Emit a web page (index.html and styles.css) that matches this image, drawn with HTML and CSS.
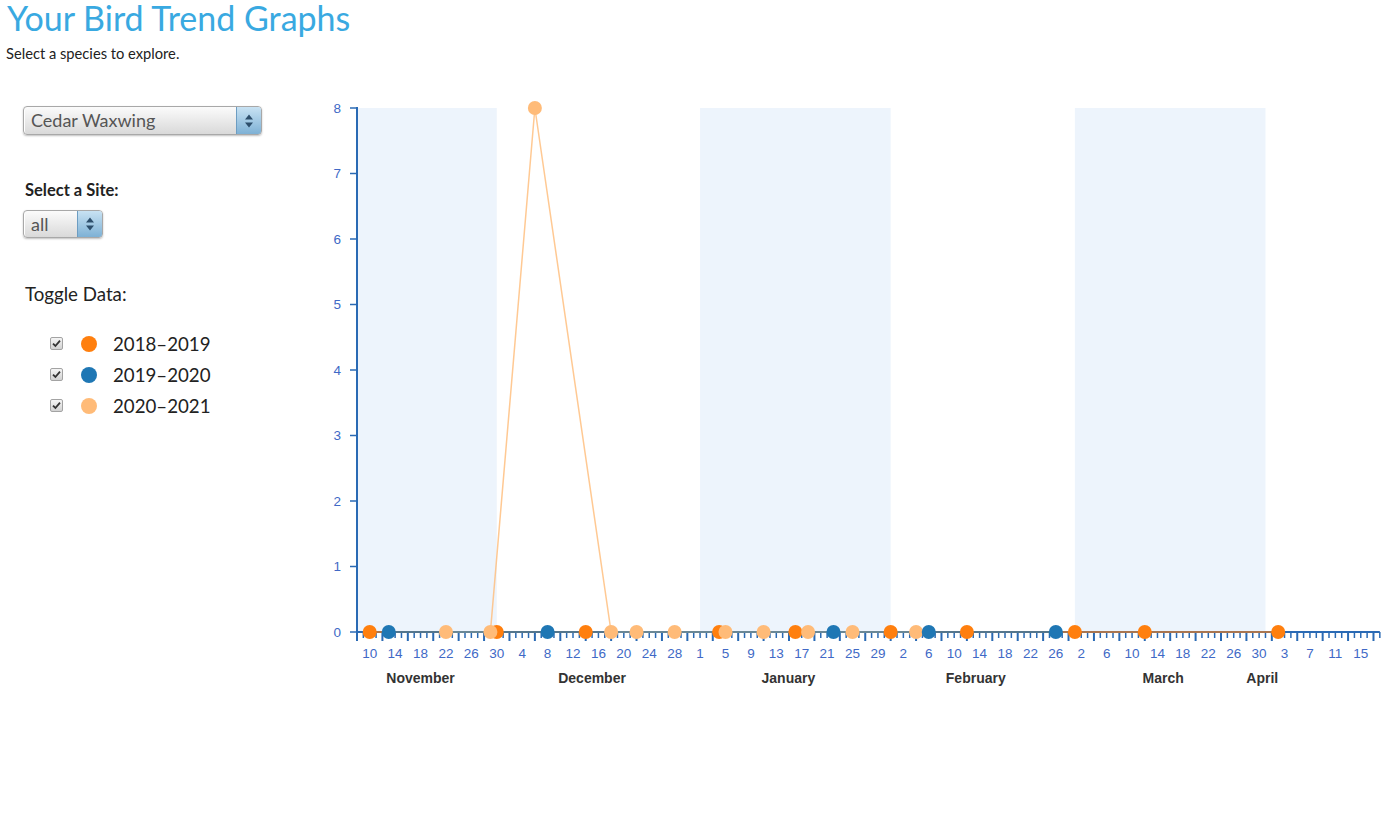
FILE: index.html
```html
<!DOCTYPE html>
<html lang="en">
<head>
  <meta charset="UTF-8">
  <title>Your Bird Trend Graphs</title>
  <link rel="stylesheet" href="styles.css">
</head>
<body>

  <h1>Your Bird Trend Graphs</h1>
  <p class="intro">Select a species to explore.</p>

  <div class="layout">

    <!-- Controls on the left -->
    <div class="sidebar">
      <div class="picker picker-wide">
        <span class="picker-value">Cedar Waxwing</span>
        <span class="picker-arrows">
          <svg width="10" height="16" viewBox="0 0 10 16"><path d="M1 6.5 L5 1.5 L9 6.5 Z M1 9.5 L5 14.5 L9 9.5 Z" fill="#2d4e6b"/></svg>
        </span>
      </div>

      <label class="site-label">Select a Site:</label>
      <div class="picker picker-small">
        <span class="picker-value">all</span>
        <span class="picker-arrows">
          <svg width="10" height="16" viewBox="0 0 10 16"><path d="M1 6.5 L5 1.5 L9 6.5 Z M1 9.5 L5 14.5 L9 9.5 Z" fill="#2d4e6b"/></svg>
        </span>
      </div>

      <p class="toggle-title">Toggle Data:</p>
      <ul class="legend">
        <li>
          <span class="check"><svg width="9" height="9" viewBox="0 0 9 9"><path d="M1 4.6 L3.4 7 L8 1.6" fill="none" stroke="#333" stroke-width="1.8"/></svg></span>
          <span class="dot season-a"></span>2018–2019
        </li>
        <li>
          <span class="check"><svg width="9" height="9" viewBox="0 0 9 9"><path d="M1 4.6 L3.4 7 L8 1.6" fill="none" stroke="#333" stroke-width="1.8"/></svg></span>
          <span class="dot season-b"></span>2019–2020
        </li>
        <li>
          <span class="check"><svg width="9" height="9" viewBox="0 0 9 9"><path d="M1 4.6 L3.4 7 L8 1.6" fill="none" stroke="#333" stroke-width="1.8"/></svg></span>
          <span class="dot season-c"></span>2020–2021
        </li>
      </ul>
    </div>

    <!-- Chart drawn by the script below -->
    <svg id="chart" class="chart" width="1066" height="610"></svg>
  </div>

  <script>
    const NS = 'http://www.w3.org/2000/svg';
    const svg = document.getElementById('chart');

    const DAY = 6.353;   // px per day
    const LEFT = 37;     // x of Nov 8
    const BASE = 542;    // y of zero
    const UNIT = 65.5;   // px per bird
    const LAST = 161;    // number of days shown

    const xPos = d => LEFT + d * DAY;
    const yPos = v => BASE - v * UNIT;

    function el(tag, attrs, text) {
      const node = document.createElementNS(NS, tag);
      for (const k in attrs) node.setAttribute(k, attrs[k]);
      if (text !== undefined) node.textContent = text;
      svg.appendChild(node);
      return node;
    }

    // start = offset of the 1st from Nov 8, label = day where the name sits
    const months = [
      { name: 'November', start: -7, len: 30, label: 10 },
      { name: 'December', start: 23, len: 31, label: 37 },
      { name: 'January', start: 54, len: 31, label: 67.9 },
      { name: 'February', start: 85, len: 28, label: 97.4 },
      { name: 'March', start: 113, len: 31, label: 126.9 },
      { name: 'April', start: 144, len: 30, label: 142.5 }
    ];

    function dayOfMonth(d) {
      const m = months.find(m => d >= m.start && d < m.start + m.len);
      return d - m.start + 1;
    }

    // Shaded bands for every other month
    months.forEach((m, i) => {
      if (i % 2) return;
      const a = xPos(Math.max(m.start, 0));
      const b = xPos(m.start + m.len - 1);
      el('rect', { x: a, y: yPos(8), width: b - a, height: BASE - yPos(8), class: 'band' });
    });

    // Y axis
    el('line', { x1: LEFT, x2: LEFT, y1: yPos(8) - 1, y2: BASE, class: 'axis-line' });
    for (let v = 0; v <= 8; v++) {
      el('line', { x1: LEFT - 7, x2: LEFT, y1: yPos(v), y2: yPos(v), class: 'tick' });
      el('text', { x: LEFT - 16, y: yPos(v) + 4.5, class: 'tick-label', 'text-anchor': 'end' }, v);
    }

    // X axis with a tick for every day
    el('line', { x1: LEFT, x2: xPos(LAST), y1: BASE, y2: BASE, class: 'axis-line' });
    for (let d = 0; d <= LAST; d++) {
      const long = d % 4 === 0;
      el('line', {
        x1: xPos(d), x2: xPos(d), y1: BASE, y2: BASE + (long ? 9 : 6),
        class: long ? 'tick tick-long' : 'tick'
      });
      if (d % 4 === 2) {
        el('text', { x: xPos(d), y: 568, class: 'tick-label', 'text-anchor': 'middle' }, dayOfMonth(d));
      }
    }
    months.forEach(m => {
      el('text', { x: xPos(m.label), y: 593, class: 'month-label', 'text-anchor': 'middle' }, m.name);
    });

    // Counts per visit: [day offset, birds]
    const seasons = [
      { color: '#ff7f0e', points: [[2,0],[22,0],[36,0],[57,0],[69,0],[84,0],[96,0],[113,0],[124,0],[145,0]] },
      { color: '#ffbb78', points: [[14,0],[21,0],[28,8],[40,0],[44,0],[50,0],[58,0],[64,0],[71,0],[78,0],[88,0]] },
      { color: '#1f77b4', points: [[5,0],[30,0],[75,0],[90,0],[110,0]] }
    ];

    seasons.forEach(s => {
      const pts = s.points.map(p => xPos(p[0]) + ',' + yPos(p[1])).join(' ');
      el('polyline', { points: pts, class: 'trend', stroke: s.color });
    });
    seasons.forEach(s => {
      s.points.forEach(p => el('circle', { cx: xPos(p[0]), cy: yPos(p[1]), r: 7, fill: s.color }));
    });
  </script>

</body>
</html>
```

FILE: styles.css
```css
/* Page */
body {
  margin: 0;
  font-family: 'Lato', 'Open Sans', sans-serif;
  color: #222;
  background-color: #fff;
}

h1 {
  margin: 0;
  padding: 0 0 0 7px;
  font-size: 34px;
  font-weight: 400;
  line-height: 35px;
  color: #39a9e1;
}

.intro {
  margin: 8px 0 0 6px;
  font-size: 14.7px;
  line-height: 20px;
}

.layout {
  display: flex;
  align-items: flex-start;
}

/* Left column */
.sidebar {
  flex: 0 0 297px;
  padding: 43px 0 0 23px;
}

.picker {
  display: flex;
  box-sizing: border-box;
  height: 29px;
  border: 1px solid #a8a8a8;
  border-radius: 4px;
  background: linear-gradient(#fbfbfb, #d9d9d9);
  box-shadow: 0 1px 2px rgba(0, 0, 0, 0.25), inset 3px 0 0 -2px #fff;
  overflow: hidden;
}

.picker-wide {
  width: 239px;
}

.picker-small {
  width: 80px;
  height: 28px;
  margin-top: 10px;
}

.picker-value {
  flex: 1;
  padding-left: 7px;
  font-size: 18px;
  line-height: 27px;
  color: #555;
}

.picker-arrows {
  display: flex;
  align-items: center;
  justify-content: center;
  width: 24px;
  border-left: 1px solid #6d9dc2;
  background: linear-gradient(#c8e2f3, #7eb1d5);
}

.site-label {
  display: block;
  margin: 45px 0 0 2px;
  font-size: 16.5px;
  font-weight: 700;
  line-height: 20px;
}

.toggle-title {
  margin: 45px 0 0 2px;
  font-size: 18.7px;
  line-height: 22px;
}

.legend {
  list-style: none;
  margin: 23px 0 0 0;
  padding: 0;
}

.legend li {
  display: flex;
  align-items: center;
  height: 31px;
  font-size: 18.7px;
}

.check {
  display: flex;
  align-items: center;
  justify-content: center;
  box-sizing: border-box;
  width: 13px;
  height: 13px;
  margin-left: 27px;
  border: 1px solid #a3a3a3;
  border-radius: 2px;
  background: linear-gradient(#f5f5f5, #d2d2d2);
}

.dot {
  width: 16px;
  height: 16px;
  margin: 0 16px 0 18px;
  border-radius: 50%;
}

.season-a { background-color: #ff7f0e; }
.season-b { background-color: #1f77b4; }
.season-c { background-color: #ffbb78; }

/* Chart */
.chart {
  flex: 0 0 auto;
  margin-top: 27px;
  font-family: 'Liberation Sans', Arial, sans-serif;
}

.band {
  fill: #edf4fc;
}

.axis-line {
  stroke: #2a6ab4;
  stroke-width: 2;
}

.tick {
  stroke: #2a6ab4;
  stroke-width: 1.5;
}

.tick-long {
  stroke-width: 2;
}

.tick-label {
  font-size: 13.5px;
  fill: #4069c6;
}

.month-label {
  font-size: 14px;
  font-weight: bold;
  fill: #333;
}

.trend {
  fill: none;
  stroke-width: 1.5;
  stroke-opacity: 0.8;
}
```
